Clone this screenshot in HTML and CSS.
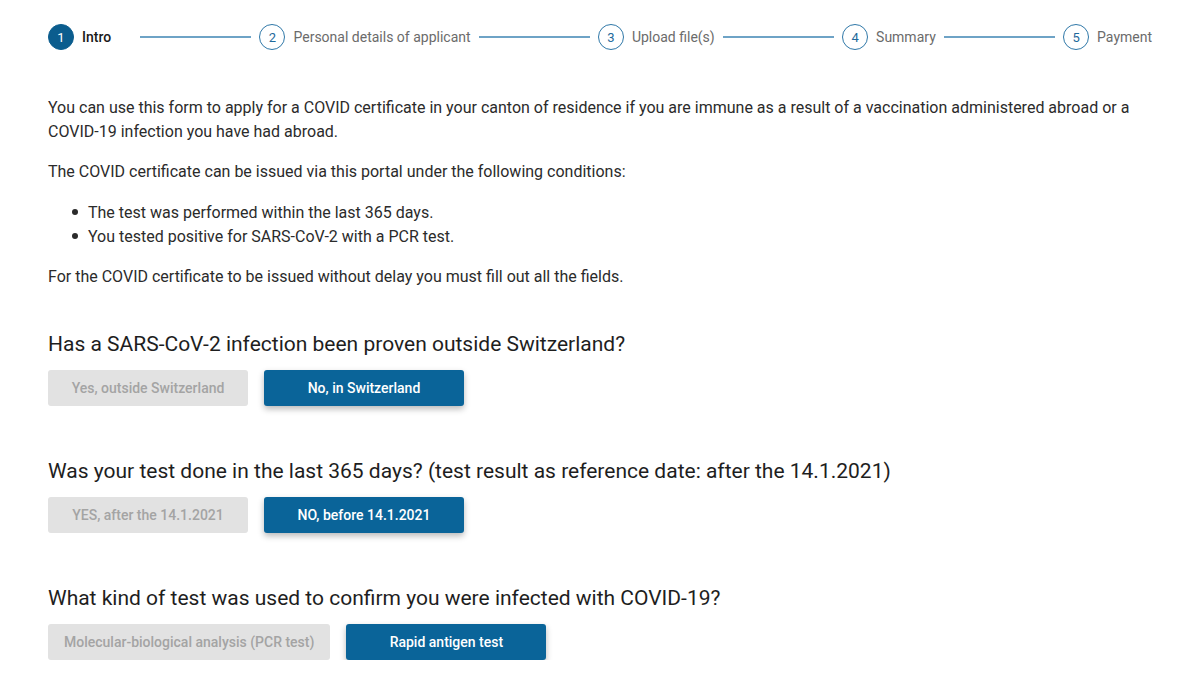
FILE: index.html
```html
<!DOCTYPE html>
<html lang="en">
<head>
<meta charset="utf-8">
<title>COVID certificate</title>
<link rel="stylesheet" href="styles.css">
</head>
<body>
<div class="page">
  <nav class="stepper">
    <div class="step active"><span class="num">1</span><span class="label">Intro</span></div>
    <span class="line intro-line"></span>
    <div class="step"><span class="num">2</span><span class="label">Personal details of applicant</span></div>
    <span class="line"></span>
    <div class="step"><span class="num">3</span><span class="label">Upload file(s)</span></div>
    <span class="line"></span>
    <div class="step"><span class="num">4</span><span class="label">Summary</span></div>
    <span class="line"></span>
    <div class="step"><span class="num">5</span><span class="label">Payment</span></div>
  </nav>

  <main class="content">
    <p class="first">You can use this form to apply for a COVID certificate in your canton of residence if you are immune as a result of a vaccination administered abroad or a COVID-19 infection you have had abroad.</p>
    <p>The COVID certificate can be issued via this portal under the following conditions:</p>
    <ul>
      <li>The test was performed within the last 365 days.</li>
      <li>You tested positive for SARS-CoV-2 with a PCR test.</li>
    </ul>
    <p>For the COVID certificate to be issued without delay you must fill out all the fields.</p>

    <section class="question">
      <h2>Has a SARS-CoV-2 infection been proven outside Switzerland?</h2>
      <div class="choices">
        <button class="btn off">Yes, outside Switzerland</button>
        <button class="btn on">No, in Switzerland</button>
      </div>
    </section>

    <section class="question">
      <h2>Was your test done in the last 365 days? (test result as reference date: after the 14.1.2021)</h2>
      <div class="choices">
        <button class="btn off">YES, after the 14.1.2021</button>
        <button class="btn on">NO, before 14.1.2021</button>
      </div>
    </section>

    <section class="question">
      <h2>What kind of test was used to confirm you were infected with COVID-19?</h2>
      <div class="choices">
        <button class="btn off">Molecular-biological analysis (PCR test)</button>
        <button class="btn on">Rapid antigen test</button>
      </div>
    </section>
  </main>
</div>
</body>
</html>
```

FILE: styles.css
```css
* { box-sizing: border-box; }
html, body { margin: 0; padding: 0; background: #fff; }
body {
  font-family: Roboto, "Liberation Sans", Arial, sans-serif;
  color: #2b2b2b;
  -webkit-font-smoothing: antialiased;
}
.page { padding: 24px 48px 0 48px; }

.stepper {
  display: flex;
  align-items: center;
  height: 26px;
}
.step {
  display: flex;
  align-items: center;
  gap: 8px;
  flex: none;
}
.num {
  width: 26px;
  height: 26px;
  border-radius: 50%;
  border: 1.5px solid #2f78a8;
  color: #1f6a9c;
  font-size: 13px;
  display: flex;
  align-items: center;
  justify-content: center;
  line-height: 1;
}
.step.active .num {
  background: #0b5d8e;
  border-color: #0b5d8e;
  color: #fff;
}
.label {
  font-size: 14px;
  color: #6b6b6b;
}
.step.active .label {
  color: #1a1a1a;
  font-weight: 500;
}
.line {
  flex: 1;
  height: 1.5px;
  background: #6ea3c6;
  margin: 0 8px;
}
.line.intro-line { margin-left: 29px; }

.content { margin-top: 46px; }
.content p, .content li {
  font-size: 16px;
  line-height: 24px;
  color: #2b2b2b;
}
.content p { margin: 16px 0 0 0; }
.content p.first { margin-top: 0; }
.content ul {
  margin: 17px 0 16px 0;
  padding-left: 40px;
  list-style: none;
}
.content li::before {
  content: "";
  display: inline-block;
  width: 6px;
  height: 6px;
  border-radius: 50%;
  background: #2b2b2b;
  margin-left: -16px;
  margin-right: 10px;
  vertical-align: 3px;
}
.content ul + p { margin-top: 16px; }

.question { margin-top: 41px; }
.question + .question { margin-top: 51px; }
.question h2 {
  font-size: 21px;
  line-height: 28px;
  font-weight: 400;
  color: #1e1e1e;
  margin: 0 0 12px 0;
}
.choices {
  display: flex;
  gap: 16px;
}
.btn {
  font-family: Roboto, "Liberation Sans", Arial, sans-serif;
  min-width: 200px;
  height: 36px;
  padding: 0 16px;
  border: none;
  border-radius: 3px;
  font-size: 14px;
  font-weight: 500;
  cursor: pointer;
}
.btn.off {
  background: #e2e2e2;
  color: #a4a4a4;
}
.btn.on {
  background: #0a6499;
  color: #fff;
  box-shadow: 0 3px 6px rgba(0, 0, 0, 0.28);
}
```
